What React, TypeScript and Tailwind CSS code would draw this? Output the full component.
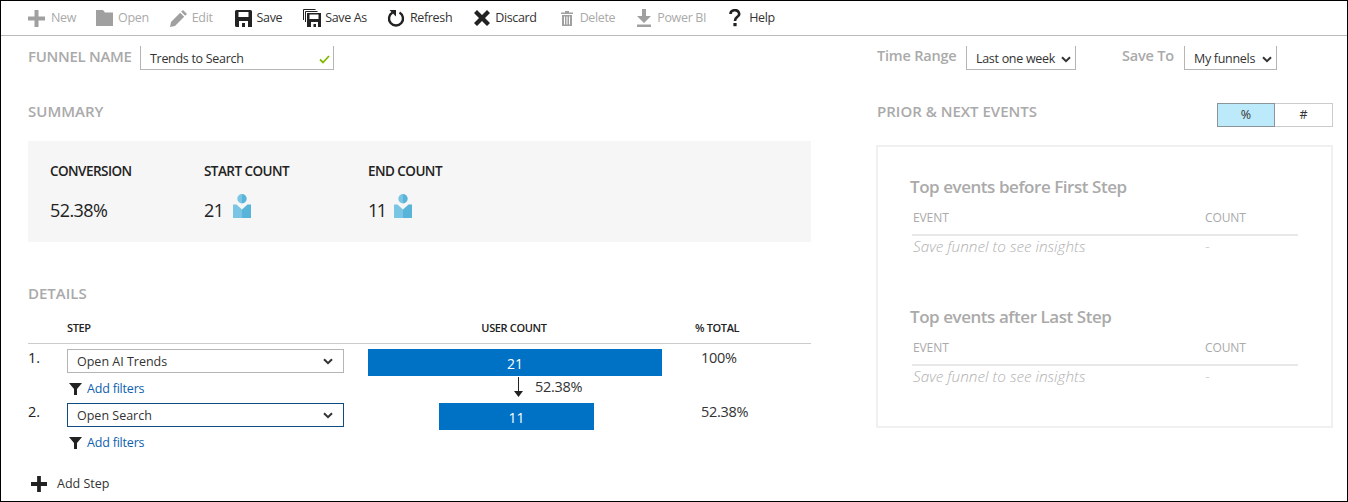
import type { ReactNode } from "react";

const PlusIcon = ({ className }: { className: string }) => (
  <svg viewBox="0 0 17 17" className={className} fill="currentColor">
    <path d="M6.5 0h4v6.5H17v4h-6.5V17h-4v-6.5H0v-4h6.5z" />
  </svg>
);

const FolderIcon = () => (
  <svg viewBox="0 0 17 16" className="h-4 w-[17px]" fill="currentColor">
    <path d="M0 0h7l2 2.500h8V16H0z" />
  </svg>
);

const PencilIcon = () => (
  <svg viewBox="0 0 17 17" className="h-[17px] w-[17px]" fill="currentColor">
    <path d="M13 0l4 4-1.800 1.800-4-4zM10.200 2.800l4 4L5 16l-5 1 1-5z" />
  </svg>
);

const SaveIcon = () => (
  <svg viewBox="0 0 17 17" className="h-[17px] w-[17px]" fill="currentColor">
    <path
      fillRule="evenodd"
      d="M0 1.500A1.500 1.500 0 0 1 1.500 0h14A1.500 1.500 0 0 1 17 1.500V17h-4v-6H4v6H1.500A1.500 1.500 0 0 1 0 15.500zM3.500 2v5h10V2z"
    />
    <rect x="7" y="13" width="3" height="4" />
  </svg>
);

const SaveAsIcon = () => (
  <svg viewBox="0 0 18 18" className="h-[18px] w-[18px]" fill="none" stroke="currentColor">
    <path d="M.5 11V.5h12M2.500 13V2.500h12" />
    <path
      fill="currentColor"
      stroke="none"
      fillRule="evenodd"
      d="M4 4h14v14h-3v-5H8v5H4zM6.500 5.500V10h9V5.500z"
    />
    <rect x="10.500" y="15" width="2.500" height="3" fill="currentColor" stroke="none" />
  </svg>
);

const RefreshIcon = () => (
  <svg viewBox="0 0 18 18" className="h-[18px] w-[18px]" fill="none">
    <path d="M5.500 3.500a7 7 0 1 0 7 0" stroke="currentColor" strokeWidth="2.400" />
    <path d="M2.500 1h6.500v6.500z" fill="currentColor" />
  </svg>
);

const DiscardIcon = () => (
  <svg viewBox="0 0 16 16" className="h-4 w-4" fill="currentColor">
    <path d="M3 0l5 5 5-5 3 3-5 5 5 5-3 3-5-5-5 5-3-3 5-5-5-5z" />
  </svg>
);

const TrashIcon = () => (
  <svg viewBox="0 0 12 15" className="h-[15px] w-3" fill="currentColor">
    <path d="M4 0h4v1.500h4V3H0V1.500h4z" />
    <path
      fillRule="evenodd"
      d="M1 4h10v11H1zM3 5.500V13.500h1V5.500zM5.500 5.500V13.500h1V5.500zM8 5.500V13.500h1V5.500z"
    />
  </svg>
);

const DownloadIcon = () => (
  <svg viewBox="0 0 14 18" className="h-[18px] w-[14px]" fill="currentColor">
    <path d="M5 0h4v7h5l-7 7-7-7h5z" />
    <rect x="0" y="15.500" width="14" height="2.500" />
  </svg>
);

const HelpIcon = () => (
  <svg viewBox="0 0 12 18" className="h-[18px] w-3" fill="none">
    <path d="M1.500 5A4.300 3.800 0 1 1 8 8.200C6.500 9.200 6 10 6 12" stroke="currentColor" strokeWidth="2.600" />
    <rect x="4.400" y="14" width="3.200" height="3.200" fill="currentColor" />
  </svg>
);

const Chevron = () => (
  <svg viewBox="0 0 10 7" className="h-[7px] w-[10px] shrink-0" fill="none" stroke="currentColor" strokeWidth="2">
    <path d="M1 1.200l4 4 4-4" />
  </svg>
);

const UserIcon = () => (
  <svg viewBox="0 0 18 24" className="h-6 w-[18px]">
    <path d="M9 0a4.700 4.700 0 0 0 0 9.400z" fill="#7ac5e4" />
    <path d="M9 0a4.700 4.700 0 0 1 0 9.400z" fill="#59b4d9" />
    <path d="M0 10.500h3.500l5.500 5v8.500H0z" fill="#7ac5e4" />
    <path d="M18 10.500h-3.500l-5.500 5v8.500h9z" fill="#59b4d9" />
  </svg>
);

const FilterIcon = () => (
  <svg viewBox="0 0 13 12" className="h-3 w-[13px] text-[#222]" fill="currentColor">
    <path d="M0 0h13L8 6v6H5V6z" />
  </svg>
);

const toolbarItems: { label: string; icon: ReactNode; off?: boolean; iconW: number; next: number }[] = [
  { label: "New", icon: <PlusIcon className="h-[17px] w-[17px]" />, off: true, iconW: 23, next: 20 },
  { label: "Open", icon: <FolderIcon />, off: true, iconW: 22, next: 21 },
  { label: "Edit", icon: <PencilIcon />, off: true, iconW: 22, next: 22 },
  { label: "Save", icon: <SaveIcon />, iconW: 22, next: 21 },
  { label: "Save As", icon: <SaveAsIcon />, iconW: 22, next: 20 },
  { label: "Refresh", icon: <RefreshIcon />, iconW: 23, next: 22 },
  { label: "Discard", icon: <DiscardIcon />, iconW: 21, next: 24 },
  { label: "Delete", icon: <TrashIcon />, off: true, iconW: 19, next: 22 },
  { label: "Power BI", icon: <DownloadIcon />, off: true, iconW: 20, next: 23 },
  { label: "Help", icon: <HelpIcon />, iconW: 20, next: 0 },
];

const ToolbarButton = ({ item }: { item: (typeof toolbarItems)[number] }) => (
  <div
    className={`flex items-center ${item.off ? "text-[#a0a0a0]" : "text-[#222]"}`}
    style={{ marginRight: item.next }}
  >
    <span className="flex items-center" style={{ width: item.iconW }}>
      {item.icon}
    </span>
    <span className={`text-[12.5px] ${item.off ? "text-[#aaa]" : "text-[#333]"}`}>{item.label}</span>
  </div>
);

const SummaryStat = ({
  label,
  value,
  valueClass,
  user,
  width,
}: {
  label: string;
  value: string;
  valueClass?: string;
  user?: boolean;
  width: string;
}) => (
  <div className={width}>
    <div className="flex h-[20px] items-center text-[13.5px] font-semibold tracking-[-0.55px] text-[#222]">{label}</div>
    <div className="mt-[10px] flex h-[30px] items-center text-[18px] tracking-[-0.6px] text-[#222]">
      <span className={`mt-[8px] ${valueClass ?? ""}`}>{value}</span>
      {user && <UserIcon />}
    </div>
  </div>
);

const StepRow = ({
  num,
  name,
  count,
  barClass,
  total,
  active,
}: {
  num: string;
  name: string;
  count: string;
  barClass: string;
  total: string;
  active?: boolean;
}) => (
  <div className="flex">
    <div className="w-[39px] text-[14.5px] leading-[18px] text-[#222]">{num}</div>
    <div className="w-[277px]">
      <div
        className={`flex h-[24px] items-center justify-between border pl-[9px] pr-[10px] text-[12.5px] text-[#333] ${
          active ? "border-[#0f4c81]" : "border-[#b5b5b5]"
        }`}
      >
        <span className="pt-[2px]">{name}</span>
        <Chevron />
      </div>
      <div className="mt-[8px] flex h-[16px] items-center gap-[5px] pl-[2px]">
        <FilterIcon />
        <span className="text-[12.5px] tracking-[-0.2px] text-[#0e5fb0]">Add filters</span>
      </div>
    </div>
    <div className="ml-[24px] w-[294px]">
      <div
        className={`flex h-[27px] items-center justify-center bg-[#0072c6] pt-[1px] text-[14px] text-white ${barClass}`}
      >
        {count}
      </div>
    </div>
    <div className="ml-[39px] text-[14.5px] leading-[18px] tracking-[-0.3px] text-[#333]">{total}</div>
  </div>
);

const EventsTable = ({ title }: { title: string }) => (
  <div>
    <div className="h-[24px] text-[17px] font-semibold leading-[24px] tracking-[-0.45px] text-[#aaa]">{title}</div>
    <div className="ml-[2px] flex h-[37px] w-[386px] items-center border-b-2 border-[#e8e8e8] pt-[2px] text-[12px] tracking-[-0.1px] text-[#aaa]">
      <span className="w-[293px] pl-[1px]">EVENT</span>
      <span>COUNT</span>
    </div>
    <div className="ml-[2px] flex h-[22px] items-center pb-[2px] text-[15.3px] font-light italic text-[#b0b0b0]">
      <span className="w-[293px] pl-[1px]">Save funnel to see insights</span>
      <span>-</span>
    </div>
  </div>
);

export default function App() {
  return (
    <div className="flex h-[502px] w-[1348px] flex-col overflow-hidden border border-black bg-white font-['Open_Sans','Noto_Sans',sans-serif]">
      <div className="flex h-[35px] shrink-0 items-center border-b border-[#bbb] pl-[27px] tracking-[-0.35px]">
        {toolbarItems.map((item) => (
          <ToolbarButton key={item.label} item={item} />
        ))}
      </div>

      <div className="flex flex-1">
        <div className="ml-[27px] w-[783px]">
          <div className="mt-[10px] flex h-[24px] items-start">
            <span className="w-[112px] text-[15px] font-semibold leading-[20px] tracking-[-0.3px] text-[#aaa]">
              FUNNEL NAME
            </span>
            <div className="flex h-[24px] w-[194px] items-center justify-between border-x border-b border-[#b5b5b5] pl-[9px] pr-[3px] text-[12.5px] tracking-[-0.3px] text-[#333]">
              <span className="pt-[3px]">Trends to Search</span>
              <svg viewBox="0 0 11 9" className="mt-[3px] h-[9px] w-[11px]" fill="none" stroke="#7fba00" strokeWidth="1.800">
                <path d="M1 4.500l3 3 6-6.500" />
              </svg>
            </div>
          </div>

          <div className="mt-[32px] h-[20px] text-[15px] font-semibold leading-[18px] text-[#aaa]">SUMMARY</div>

          <div className="mt-[19px] flex h-[101px] bg-[#f6f6f6] pl-[22px] pt-[20px]">
            <SummaryStat label="CONVERSION" value="52.38%" width="w-[154px]" />
            <SummaryStat label="START COUNT" value="21" valueClass="w-[29px]" user width="w-[164px]" />
            <SummaryStat label="END COUNT" value="11" valueClass="w-[26px] tracking-[-1.5px]" user width="w-[120px]" />
          </div>

          <div className="mt-[42px] h-[20px] text-[15px] font-semibold leading-[18px] text-[#aaa]">DETAILS</div>

          <div className="mt-[16px] flex h-[24px] items-center border-b border-[#ccc] pb-[6px] text-[11px] font-semibold tracking-[-0.35px] text-[#222]">
            <span className="w-[340px] pl-[39px]">STEP</span>
            <span className="w-[292px] text-center">USER COUNT</span>
            <span className="ml-[35px]">% TOTAL</span>
          </div>

          <div className="mt-[5px]">
            <StepRow num="1." name="Open AI Trends" count="21" barClass="w-full" total="100%" />
            <div className="-mt-[24px] ml-[486px] flex h-[28px] items-center">
              <svg viewBox="0 0 9 20" className="h-5 w-[9px] text-[#222]" fill="currentColor">
                <rect x="4" y="0" width="1" height="15" />
                <path d="M0 14h9l-4.500 6z" />
              </svg>
              <span className="ml-[12px] text-[14.5px] tracking-[-0.3px] text-[#333]">52.38%</span>
            </div>
            <div className="mt-[2px]">
              <StepRow num="2." name="Open Search" count="11" barClass="ml-[71px] w-[155px]" total="52.38%" active />
            </div>
          </div>

          <div className="ml-[3px] mt-[24px] flex items-center text-[12.5px] text-[#333]">
            <PlusIcon className="h-4 w-4 text-[#222]" />
            <span className="ml-[10px]">Add Step</span>
          </div>
        </div>

        <div className="ml-[66px] w-[456px]">
          <div className="mt-[10px] flex h-[24px] items-start">
            <span className="w-[89px] text-[14.5px] font-semibold leading-[20px] tracking-[-0.2px] text-[#aaa]">
              Time Range
            </span>
            <div className="flex h-[24px] w-[110px] items-center justify-between border-x border-b border-[#b5b5b5] pl-[9px] pr-[4px] text-[12.5px] tracking-[-0.3px] text-[#333]">
              <span className="pt-[3px]">Last one week</span>
              <span className="pt-[3px]">
                <Chevron />
              </span>
            </div>
            <span className="ml-[46px] w-[62px] text-[14.5px] font-semibold leading-[20px] tracking-[-0.2px] text-[#aaa]">
              Save To
            </span>
            <div className="flex h-[24px] w-[93px] items-center justify-between border-x border-b border-[#b5b5b5] pl-[9px] pr-[4px] text-[12.5px] tracking-[-0.3px] text-[#333]">
              <span className="pt-[3px]">My funnels</span>
              <span className="pt-[3px]">
                <Chevron />
              </span>
            </div>
          </div>

          <div className="mt-[32px] flex h-[25px] items-start justify-between">
            <span className="text-[15px] font-semibold leading-[18px] text-[#aaa]">PRIOR &amp; NEXT EVENTS</span>
            <div className="mt-[1px] flex h-[24px] text-[12.5px] text-[#333]">
              <span className="flex w-[58px] items-center justify-center border border-[#8a9499] bg-[#bdeafa]">%</span>
              <span className="flex w-[58px] items-center justify-center border-y border-r border-[#ccc]">#</span>
            </div>
          </div>

          <div className="-ml-[1px] mt-[18px] h-[283px] border-2 border-[#f0f0f0] pl-[32px] pt-[28px]">
            <EventsTable title="Top events before First Step" />
            <div className="mt-[47px]">
              <EventsTable title="Top events after Last Step" />
            </div>
          </div>
        </div>
      </div>
    </div>
  );
}
